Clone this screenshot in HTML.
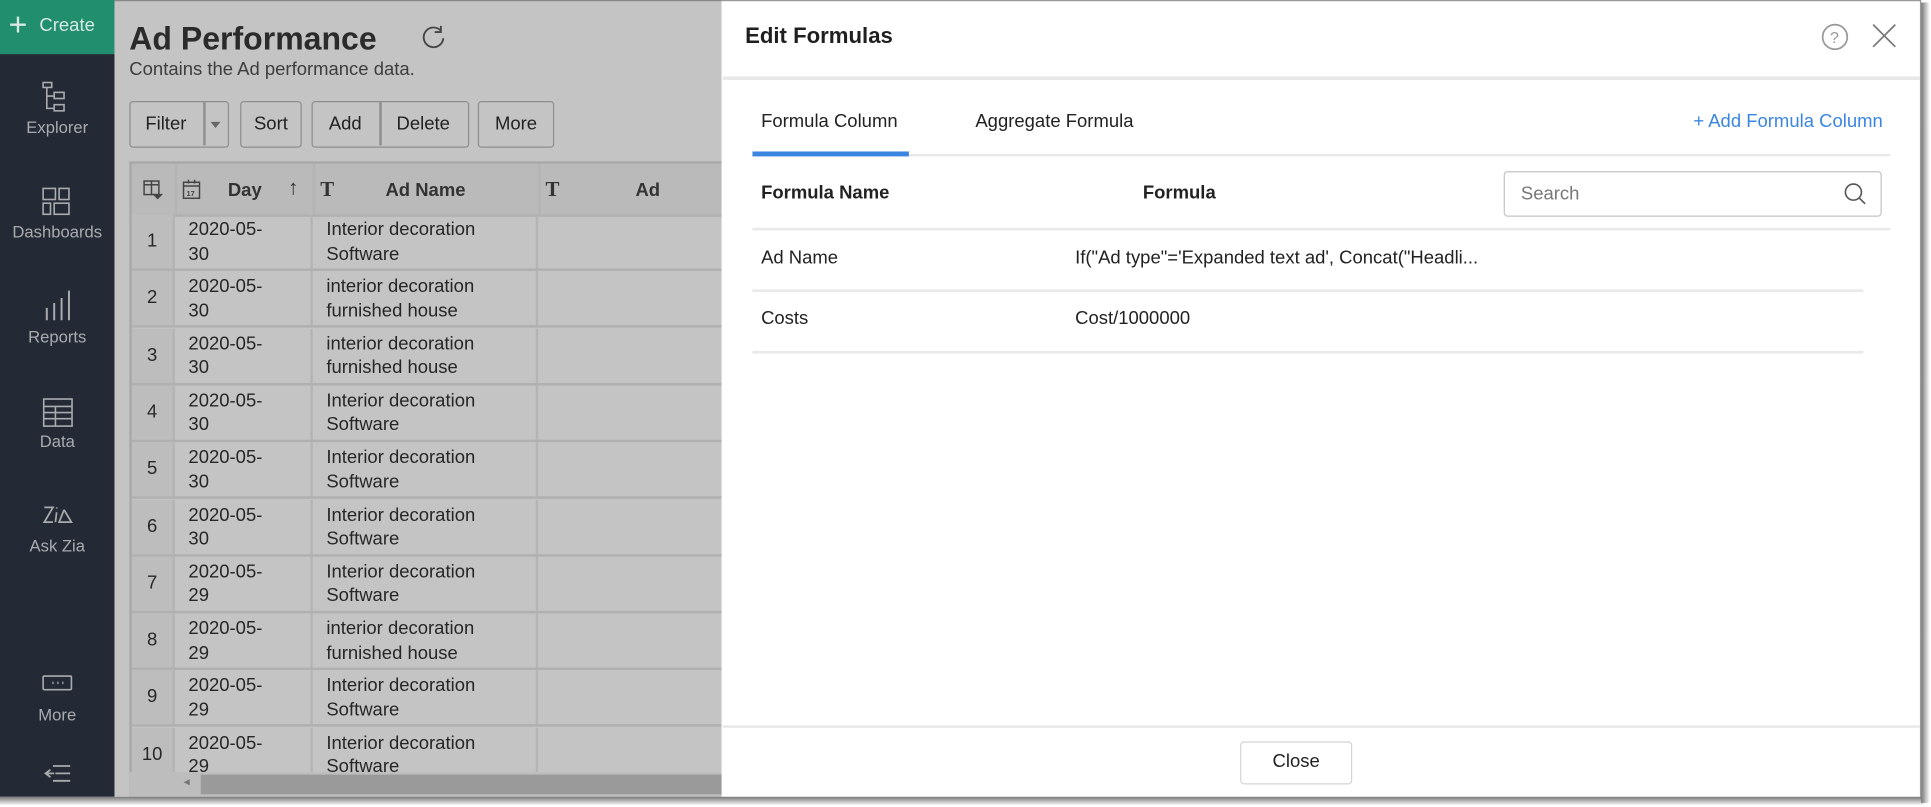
<!DOCTYPE html>
<html><head><meta charset="utf-8"><style>
*{box-sizing:border-box;margin:0;padding:0}
html,body{width:1931px;height:807px;overflow:hidden;background:#fff;font-family:"Liberation Sans",sans-serif}
#w{position:absolute;left:0;top:0;width:1568px;height:655.3px;transform:scale(1.23151);transform-origin:0 0}
.a{position:absolute}
.side{left:0;top:0;width:93px;height:647px;background:#242a35}
.create{left:0;top:0;width:93px;height:44px;background:#218f6e;color:#d8e8e2;font-size:15px}
.nav{left:0;width:93px;text-align:center;color:#a9abaf;font-size:13.5px}
.main{left:93px;top:0;width:493px;height:647px;background:#c4c4c4;border-top:1px solid #888}
.btn{top:82px;height:38px;border:1.5px solid #8e8e8e;border-radius:3px;background:#c4c4c4;font-size:15px;color:#222;line-height:35px;text-align:center}
.tbl{left:105px;top:131px;width:481px;height:516px;border-top:2px solid #a8a8a8;border-left:2px solid #a8a8a8;overflow:hidden}
.row{position:absolute;left:0;width:481px;height:46px;border-bottom:2px solid #b0b0b0;font-size:15px;color:#262626}
.c{position:absolute;top:0;height:100%;border-right:2px solid #b4b4b4}
.panel{left:586px;top:0;width:974px;height:647px;background:#fff;border-top:1px solid #999;border-right:1px solid #999}
.pt{color:#222;font-size:15px}
.hl{height:2px;background:#e8e8e8}
</style></head><body><div id="w">
<div class="a side"></div>
<div class="a create"><span class="a" style="left:7px;top:8px;font-size:26px;line-height:24px;font-weight:300">+</span><span class="a" style="left:32px;top:12px">Create</span></div>
<svg class="a" style="left:33px;top:66px" width="28" height="28" viewBox="0 0 28 28" fill="none" stroke="#a9abaf" stroke-width="1.3"><rect x="2" y="1" width="7" height="4"/><path d="M5 5v17h6M5 12h6"/><rect x="11" y="9" width="8" height="5"/><rect x="11" y="19" width="8" height="5"/></svg>
<div class="a nav" style="top:96px">Explorer</div>
<svg class="a" style="left:33px;top:151px" width="28" height="26" fill="none" stroke="#a9abaf" stroke-width="1.3"><rect x="2" y="2" width="10" height="9"/><rect x="15" y="2" width="8" height="9"/><rect x="2" y="14" width="6" height="9"/><rect x="11" y="14" width="12" height="9"/></svg>
<div class="a nav" style="top:181px">Dashboards</div>
<svg class="a" style="left:34px;top:234px" width="26" height="30" stroke="#a9abaf" stroke-width="1.6"><path d="M4 16v10M10 12v14M16 8v18M22 2v24"/></svg>
<div class="a nav" style="top:266px">Reports</div>
<svg class="a" style="left:34px;top:322px" width="26" height="26" fill="none" stroke="#a9abaf" stroke-width="1.3"><rect x="1.5" y="2" width="23" height="22"/><path d="M1.5 8h23M1.5 13h23M1.5 18h23M11 8v16"/></svg>
<div class="a nav" style="top:351px">Data</div>
<svg class="a" style="left:34px;top:408px" width="28" height="22" fill="none" stroke="#a9abaf" stroke-width="1.4"><path d="M2 4h7L2 16h7M12 8l-1 8M12 4v1M18 6l-4 10h10L18 6"/></svg>
<div class="a nav" style="top:436px">Ask Zia</div>
<svg class="a" style="left:34px;top:547px" width="26" height="16" fill="none" stroke="#a9abaf" stroke-width="1.3"><rect x="1" y="2" width="23" height="11" rx="1"/><path d="M8.5 7.5h1M12.5 7.5h1M16.5 7.5h1" stroke-width="2"/></svg>
<div class="a nav" style="top:573px">More</div>
<svg class="a" style="left:34px;top:619px" width="26" height="20" fill="none" stroke="#a9abaf" stroke-width="1.5"><path d="M9 3h14M11 9h12M9 15h14M7 6l-4 3 4 3M3 9h7"/></svg>

<div class="a main"></div>
<div class="a" style="left:105px;top:16px;font-size:26px;font-weight:bold;color:#2b2b2b">Ad Performance</div>
<svg class="a" style="left:341px;top:19px" width="22" height="22" fill="none" stroke="#444" stroke-width="1.5"><path d="M17 6a8 8 0 1 0 2 6"/><path d="M17 2v5h-5"/></svg>
<div class="a" style="left:105px;top:48px;font-size:15px;color:#3d3d3d">Contains the Ad performance data.</div>
<div class="a btn" style="left:105px;width:81px;text-align:left;padding-left:12px">Filter<span class="a" style="left:59px;top:0;width:1.5px;height:35px;background:#8e8e8e"></span><span class="a" style="left:65px;top:16px;border:4px solid transparent;border-top:5px solid #666"></span></div>
<div class="a btn" style="left:195px;width:50px">Sort</div>
<div class="a btn" style="left:253px;width:128px;text-align:left"><span class="a" style="left:13px">Add</span><span class="a" style="left:54px;top:0;width:1.5px;height:35px;background:#8e8e8e"></span><span class="a" style="left:68px">Delete</span></div>
<div class="a btn" style="left:388px;width:62px">More</div>

<div class="a tbl">
<div class="row" style="top:0;height:43px;background:#bababa;font-weight:bold;color:#333">
<div class="c" style="left:0;width:37px"><svg class="a" style="left:9px;top:12px" width="16" height="18" fill="none" stroke="#444" stroke-width="1.2"><rect x="1" y="2" width="12" height="11"/><path d="M1 5h12M7 2v11"/><path d="M9 13l3 3 3-3z" fill="#444"/></svg></div>
<div class="c" style="left:37px;width:112px"><svg class="a" style="left:4px;top:12px" width="16" height="18" fill="none" stroke="#444" stroke-width="1.2"><rect x="1" y="3" width="13" height="13"/><path d="M1 6h13M5 1v3M10 1v3"/><text x="3.5" y="14" font-size="6" fill="#444" stroke="none" font-family="Liberation Sans">17</text></svg><span class="a" style="left:41px;top:13px">Day</span><span class="a" style="left:90px;top:10px;font-size:17px">↑</span></div>
<div class="c" style="left:149px;width:183px"><span class="a" style="left:4px;top:11px;font-family:'Liberation Serif';font-size:17px">T</span><span class="a" style="left:57px;top:13px">Ad Name</span></div>
<div class="c" style="left:332px;width:160px;border:0"><span class="a" style="left:4px;top:11px;font-family:'Liberation Serif';font-size:17px">T</span><span class="a" style="left:77px;top:13px">Ad</span></div>
</div>
</div>
<div class="a" id="rows" style="left:107px;top:174px;width:479px;height:453px;overflow:hidden"></div>
<div class="a" style="left:105px;top:627px;width:481px;height:20px;background:#bdbdbd"><div class="a" style="left:58px;top:2px;width:423px;height:16px;background:#9a9a9a"></div><span class="a" style="left:44px;top:3px;font-size:10px;color:#777">◂</span></div>

<div class="a panel"></div>
<div class="a" style="left:605px;top:19px;font-size:18px;font-weight:bold;color:#1f1f1f">Edit Formulas</div>
<svg class="a" style="left:1478px;top:18px" width="24" height="24" fill="none" stroke="#999" stroke-width="1.4"><circle cx="12" cy="12" r="10"/><text x="8" y="17" font-size="13" fill="#999" stroke="none" font-family="Liberation Sans">?</text></svg>
<svg class="a" style="left:1519px;top:18px" width="22" height="22" stroke="#777" stroke-width="1.4"><path d="M2 2l18 18M20 2L2 20"/></svg>
<div class="a hl" style="left:587px;top:62px;width:972px;height:3px"></div>
<div class="a pt" style="left:618px;top:90px">Formula Column</div>
<div class="a pt" style="left:792px;top:90px">Aggregate Formula</div>
<div class="a" style="left:1375px;top:90px;font-size:15px;color:#3a86e0">+ Add Formula Column</div>
<div class="a hl" style="left:611px;top:125px;width:924px"></div>
<div class="a" style="left:611px;top:123px;width:127px;height:4px;background:#3a86e0"></div>
<div class="a pt" style="left:618px;top:148px;font-weight:bold">Formula Name</div>
<div class="a pt" style="left:928px;top:148px;font-weight:bold">Formula</div>
<div class="a" style="left:1221px;top:139px;width:307px;height:37px;border:1.5px solid #c4c4c4;border-radius:3px"><span class="a" style="left:13px;top:9px;font-size:15px;color:#777">Search</span><svg class="a" style="left:275px;top:8px" width="20" height="20" fill="none" stroke="#555" stroke-width="1.3"><circle cx="8" cy="8" r="6.5"/><path d="M13 13l4.5 4.5"/></svg></div>
<div class="a hl" style="left:611px;top:185px;width:924px"></div>
<div class="a pt" style="left:618px;top:201px">Ad Name</div>
<div class="a pt" style="left:873px;top:201px">If("Ad type"='Expanded text ad', Concat("Headli...</div>
<div class="a hl" style="left:611px;top:235px;width:902px"></div>
<div class="a pt" style="left:618px;top:250px">Costs</div>
<div class="a pt" style="left:873px;top:250px">Cost/1000000</div>
<div class="a hl" style="left:611px;top:285px;width:902px"></div>
<div class="a hl" style="left:587px;top:589px;width:972px"></div>
<div class="a" style="left:1007px;top:602px;width:91px;height:35px;border:1.5px solid #d4d4d4;border-radius:3px;font-size:15px;color:#222;text-align:center;line-height:32px">Close</div>
<div class="a" style="left:0;top:647px;width:1562px;height:7px;background:linear-gradient(#777,#fff)"></div>
<div class="a" style="left:1560px;top:2px;width:7px;height:650px;background:linear-gradient(90deg,#777,#fff)"></div>
</div>
<script>
var d=[["1","30","Interior decoration","Software"],["2","30","interior decoration","furnished house"],["3","30","interior decoration","furnished house"],["4","30","Interior decoration","Software"],["5","30","Interior decoration","Software"],["6","30","Interior decoration","Software"],["7","29","Interior decoration","Software"],["8","29","interior decoration","furnished house"],["9","29","Interior decoration","Software"],["10","29","Interior decoration","Software"]];
var h="";d.forEach(function(r,i){h+='<div class="row" style="top:'+(i*46.3)+'px"><div class="c" style="left:0;width:35px;background:#bdbdbd;text-align:center;line-height:44px">'+r[0]+'</div><div class="c" style="left:35px;width:112px;padding:3px 0 0 11px;line-height:19.5px">2020-05-<br>'+r[1]+'</div><div class="c" style="left:147px;width:183px;padding:3px 0 0 11px;line-height:19.5px">'+r[2]+'<br>'+r[3]+'</div></div>'});
document.getElementById("rows").innerHTML=h;
</script>
</body></html>
